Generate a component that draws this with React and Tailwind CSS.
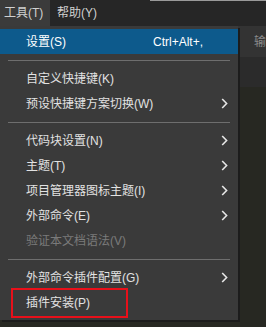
import { Fragment } from "react";

const font = {
  fontFamily: '"Liberation Sans", "Noto Sans CJK SC", sans-serif',
};

const items = [
  { label: "设置(S)", shortcut: "Ctrl+Alt+,", active: true },
  { sep: true },
  { label: "自定义快捷键(K)" },
  { label: "预设快捷键方案切换(W)", sub: true },
  { sep: true },
  { label: "代码块设置(N)", sub: true },
  { label: "主题(T)", sub: true },
  { label: "项目管理器图标主题(I)", sub: true },
  { label: "外部命令(E)", sub: true },
  { label: "验证本文档语法(V)", disabled: true },
  { sep: true },
  { label: "外部命令插件配置(G)", sub: true },
  { label: "插件安装(P)" },
];

function Chevron() {
  return (
    <svg width="7" height="11" viewBox="0 0 7 11" className="mr-[10px]">
      <polyline
        points="1.2,1 5.6,5.5 1.2,10"
        fill="none"
        stroke="#e6e6e6"
        strokeWidth="1.6"
      />
    </svg>
  );
}

export default function App() {
  return (
    <div
      className="relative w-[266px] h-[327px] overflow-hidden bg-[#272822] text-[12px]"
      style={font}
    >
      {/* menubar */}
      <div className="flex h-[26px] bg-[#262626] text-[#d0d0d0]">
        <div className="w-[50px] flex items-center pl-[4px] bg-[#3b3b3b]">工具(T)</div>
        <div className="w-[100px] flex items-center pl-[7px]">帮助(Y)</div>
        <div className="flex-1 border-t border-[#9a9a9a]" />
      </div>

      <div className="flex">
        {/* dropdown */}
        <div className="w-[238px] bg-[#3a3a3a] pt-[3px] pb-[5px] shadow-[2px_2px_0_#1c1c1c] z-10">
          {items.map((it, i) =>
            it.sep ? (
              <div key={i} className="pt-[6px] pb-[5px] px-[8px]">
                <div className="h-px bg-[#6e6e6e]" />
              </div>
            ) : (
              <div
                key={i}
                className={`flex items-center h-[25px] pl-[26px] ${
                  it.active ? "bg-[#0d5a8c] text-white" : ""
                } ${it.disabled ? "text-[#7a7a7a]" : "text-[#e2e2e2]"}`}
              >
                <span className="flex-1">{it.label}</span>
                {it.shortcut && <span className="w-[85px]">{it.shortcut}</span>}
                {it.sub && <Chevron />}
              </div>
            )
          )}
        </div>

        {/* editor area on the right */}
        <div className="flex-1 flex flex-col overflow-hidden">
          <div className="h-[31px] bg-[#333333] flex items-center pl-[16px] text-[#8a8a8a] whitespace-nowrap">
            输入
          </div>
          <div className="h-[30px] bg-[#2b2b2b]" />
          <div className="flex-1 bg-[#272822]" />
        </div>
      </div>

      {/* red annotation */}
      <div className="absolute z-20 left-[11px] top-[288px] w-[117px] h-[30px] border-2 border-[#e8101a]" />
    </div>
  );
}
